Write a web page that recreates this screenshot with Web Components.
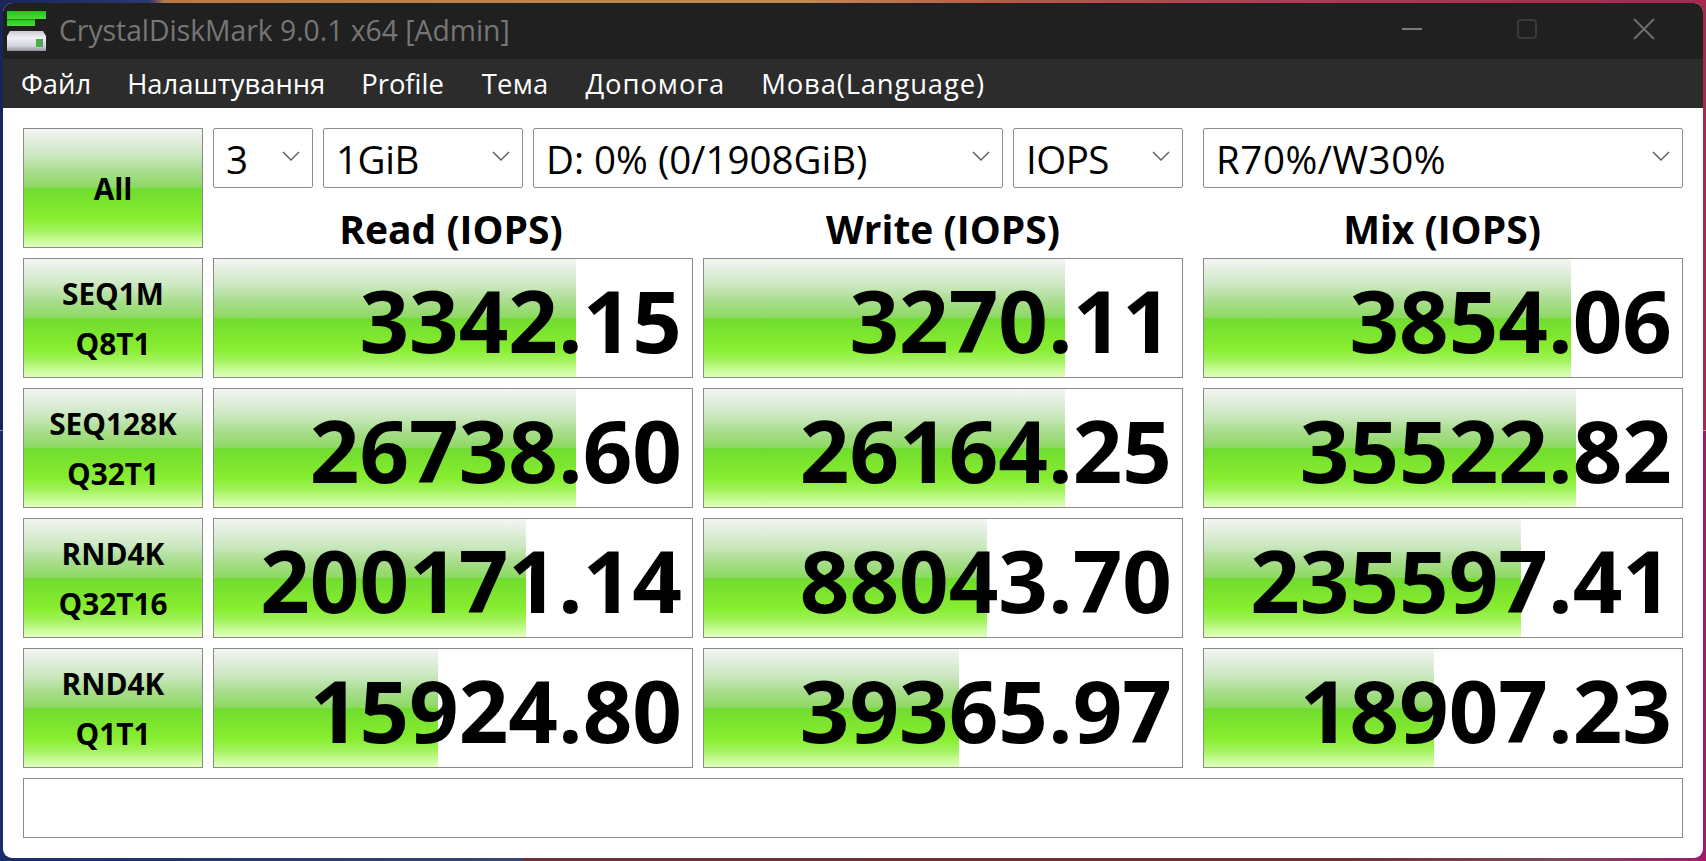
<!DOCTYPE html>
<html lang="uk"><head><meta charset="utf-8"><title>CrystalDiskMark</title>
<style>
html,body{margin:0;height:100%}
body{height:861px;overflow:hidden;box-sizing:border-box;padding:3px;font-family:"Open Sans","Noto Sans",sans-serif;
background:
 linear-gradient(90deg,#1a2458 0,#2a3a70 150px,#b87a48 165px,#c08a55 800px,#b85a48 1000px,#b03a58 1300px,#a82850 1706px) top/100% 50% no-repeat,
 linear-gradient(90deg,#1a2c6a 0,#3a4670 522px,#6e3038 525px,#703038 1350px,#7a4a5a 1550px,#a01a68 1706px) bottom/100% 50% no-repeat;}
</style></head><body>
<cdm-window>
 <cdm-titlebar slot="title">CrystalDiskMark 9.0.1 x64 [Admin]</cdm-titlebar>
 <cdm-menubar slot="menu">
  <span>Файл</span><span>Налаштування</span><span>Profile</span><span style="margin-left:2px;letter-spacing:.2px">Тема</span><span style="margin-left:1px;letter-spacing:.95px">Допомога</span><span style="letter-spacing:.85px">Мова(Language)</span>
 </cdm-menubar>
 <cdm-test-button slot="all" class="all">All</cdm-test-button>
 <cdm-select slot="sel" style="width:100px">3</cdm-select>
 <cdm-select slot="sel" style="width:200px;letter-spacing:-.4px">1GiB</cdm-select>
 <cdm-select slot="sel" style="width:470px">D: 0% (0/1908GiB)</cdm-select>
 <cdm-select slot="sel" style="width:170px;letter-spacing:-.5px">IOPS</cdm-select>
 <cdm-select slot="sel" style="width:480px;margin-left:10px;letter-spacing:.55px">R70%/W30%</cdm-select>
 <cdm-heading slot="h1" style="padding-right:4px">Read (IOPS)</cdm-heading>
 <cdm-heading slot="h2">Write (IOPS)</cdm-heading>
 <cdm-heading slot="h3" style="padding-right:2px">Mix (IOPS)</cdm-heading>

 <cdm-test-button slot="l1">SEQ1M<br>Q8T1</cdm-test-button>
 <cdm-score slot="r1" fill="362">3342.15</cdm-score>
 <cdm-score slot="w1" fill="361">3270.11</cdm-score>
 <cdm-score slot="m1" fill="367">3854.06</cdm-score>

 <cdm-test-button slot="l2">SEQ128K<br>Q32T1</cdm-test-button>
 <cdm-score slot="r2" fill="362">26738.60</cdm-score>
 <cdm-score slot="w2" fill="361">26164.25</cdm-score>
 <cdm-score slot="m2" fill="372">35522.82</cdm-score>

 <cdm-test-button slot="l3">RND4K<br>Q32T16</cdm-test-button>
 <cdm-score slot="r3" fill="312">200171.14</cdm-score>
 <cdm-score slot="w3" fill="283">88043.70</cdm-score>
 <cdm-score slot="m3" fill="317">235597.41</cdm-score>

 <cdm-test-button slot="l4">RND4K<br>Q1T1</cdm-test-button>
 <cdm-score slot="r4" fill="224">15924.80</cdm-score>
 <cdm-score slot="w4" fill="255">39365.97</cdm-score>
 <cdm-score slot="m4" fill="230">18907.23</cdm-score>

 <cdm-status slot="status"></cdm-status>
</cdm-window>
<script>
const GRAD='linear-gradient(180deg,#f3f5f3 0,#e6f0e2 8%,#cde8c2 22%,#a8dd8c 36%,#8ed964 49.5%,#70dc30 50.5%,#7ce42f 62%,#88ee30 76%,#a2f35e 86%,#c8fb98 94%,#e0ffbc 100%)';
function def(name,css,html,init){
  customElements.define(name,class extends HTMLElement{
    connectedCallback(){
      if(this.shadowRoot)return;
      const r=this.attachShadow({mode:'open'});
      r.innerHTML='<style>'+css+'</style>'+html;
      if(init)init.call(this,r);
    }
  });
}
def('cdm-window',`
 :host{display:flex;flex-direction:column;width:1700px;height:855px;border-radius:9px;overflow:hidden;background:#fff}
 .main{flex:1;display:grid;grid-template-columns:180px 480px 480px 0 480px;grid-template-rows:60px 50px repeat(4,120px) 60px;gap:10px;padding:20px;box-sizing:border-box}
 .tools{grid-column:2/6;display:flex;gap:10px}
 .all{grid-row:1/3;grid-column:1}
 .hd{grid-row:2;margin-top:6px}
 .status{grid-column:1/6}
`,`
 <slot name="title"></slot><slot name="menu"></slot>
 <div class="main">
  <div class="all"><slot name="all"></slot></div>
  <div class="tools"><slot name="sel"></slot></div>
  <div class="hd" style="grid-column:2"><slot name="h1"></slot></div>
  <div class="hd" style="grid-column:3"><slot name="h2"></slot></div>
  <div class="hd" style="grid-column:5"><slot name="h3"></slot></div>
  ${[1,2,3,4].map(i=>`<div style="grid-column:1;grid-row:${i+2}"><slot name="l${i}"></slot></div>
  <div style="grid-column:2;grid-row:${i+2}"><slot name="r${i}"></slot></div>
  <div style="grid-column:3;grid-row:${i+2}"><slot name="w${i}"></slot></div>
  <div style="grid-column:5;grid-row:${i+2}"><slot name="m${i}"></slot></div>`).join('')}
  <div class="status"><slot name="status"></slot></div>
 </div>`);
def('cdm-titlebar',`
 :host{display:flex;align-items:center;height:56px;background:#202020;color:#767676;font-size:28.3px;flex:none}
 svg.i{width:40px;height:40px;margin-left:4px;flex:none}
 .t{margin-left:12px;white-space:nowrap;flex:1;margin-top:-3px}
 .b{width:50px;height:50px;flex:none;display:block;margin-top:-5px}
`,`
 <svg class="i" viewBox="0 0 40 40"><defs>
  <linearGradient id="d" x1="0" y1="0" x2="0" y2="1"><stop offset="0" stop-color="#c9cbd2"/><stop offset=".35" stop-color="#f0f0f6"/><stop offset=".75" stop-color="#d2d4de"/><stop offset="1" stop-color="#8f9296"/></linearGradient>
  <linearGradient id="g" x1="0" y1="0" x2="0" y2="1"><stop offset="0" stop-color="#18c818"/><stop offset="1" stop-color="#52d838"/></linearGradient></defs>
  <rect x="0" y="0" width="39" height="8" fill="url(#g)"/><rect x="0" y="8" width="28" height="7" fill="url(#g)"/><rect x="0" y="8" width="28" height="1" fill="#118f11"/>
  <path d="M3 20h33l3 5v15H0V25z" fill="url(#d)"/>
  <rect x="29" y="28" width="5" height="8" fill="#3cb83c"/><rect x="34" y="28" width="2" height="8" fill="#7a8a7a"/>
 </svg>
 <span class="t"><slot></slot></span>
 <svg class="b" style="margin-right:65px" viewBox="0 0 50 50"><path d="M15 25h20" stroke="#7a7a7a" stroke-width="2"/></svg>
 <svg class="b" style="margin-right:67px" viewBox="0 0 50 50"><rect x="16" y="16" width="18" height="18" rx="3" fill="none" stroke="#3a3a3a" stroke-width="2"/></svg>
 <svg class="b" style="margin-right:34px" viewBox="0 0 50 50"><path d="M15 15l20 20M35 15l-20 20" stroke="#6e6e6e" stroke-width="2" fill="none"/></svg>
`);
def('cdm-menubar',`
 :host{display:flex;align-items:center;height:49px;background:#2c2c2c;color:#fff;font-size:27.4px;flex:none;padding-left:18px;gap:36px;white-space:nowrap}
`,`<slot></slot>`);
def('cdm-select',`
 :host{display:flex;align-items:center;justify-content:space-between;box-sizing:border-box;height:60px;background:#fff;border:1px solid #8e8e8e;border-radius:2px;color:#000;font-size:38.5px;padding:0 12px 0 12px;flex:none;white-space:nowrap}
 span{margin-top:2px}
 svg{width:18px;height:10px;flex:none;margin-top:-4px}
`,`<span><slot></slot></span><svg viewBox="0 0 18 10"><path d="M1 1l8 8 8-8" fill="none" stroke="#5a5a5a" stroke-width="1.4"/></svg>`);
def('cdm-heading',`
 :host{display:block;text-align:center;color:#000;font-size:39px;font-weight:700;line-height:50px;white-space:nowrap}
`,`<slot></slot>`);
def('cdm-test-button',`
 :host{display:flex;align-items:center;justify-content:center;box-sizing:border-box;height:100%;border:1px solid #8a8a8a;background:${GRAD};color:#000;font-size:29.8px;font-weight:700;line-height:50px;text-align:center;padding-top:2px}
`,`<div><slot></slot></div>`);
def('cdm-score',`
 :host{display:flex;align-items:center;justify-content:flex-end;box-sizing:border-box;height:100%;border:1px solid #8a8a8a;background:#fff;color:#000;font-size:86.8px;font-weight:700;padding:2px 10px 0 0;white-space:nowrap;line-height:1}
`,`<slot></slot>`,function(){
  this.style.background=GRAD+' no-repeat left top/'+this.getAttribute('fill')+'px 100%, #fff';
});
def('cdm-status',`
 :host{display:block;box-sizing:border-box;height:60px;border:1px solid #8a8a8a;background:#fff}
`,``);
</script>
</body></html>
